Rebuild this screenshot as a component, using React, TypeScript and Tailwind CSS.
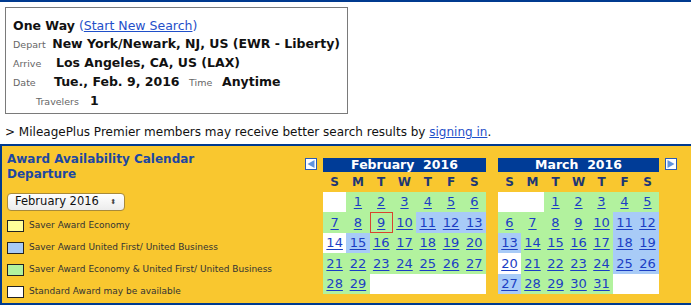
import React from 'react';

type Cell = { day?: number; tone: 'g' | 'b' | 'w'; sel?: boolean };

const toneClass: Record<Cell['tone'], string> = {
  g: 'bg-[#b2f29e]',
  b: 'bg-[#a8cbf7]',
  w: 'bg-white',
};

function buildMonth(lead: number, days: number, blue: number[], white: number[], sel?: number): Cell[] {
  const cells: Cell[] = [];
  for (let i = 0; i < lead; i++) cells.push({ tone: 'w' });
  for (let d = 1; d <= days; d++) {
    const tone = blue.includes(d) ? 'b' : white.includes(d) ? 'w' : 'g';
    cells.push({ day: d, tone, sel: d === sel });
  }
  while (cells.length % 7) cells.push({ tone: 'w' });
  return cells;
}

const feb = buildMonth(1, 29, [11, 12, 13, 15], [14], 9);
const mar = buildMonth(2, 31, [11, 12, 13, 18, 19, 25, 26, 27], [20]);

const legend = [
  { color: 'bg-[#ffff99]', label: 'Saver Award Economy' },
  { color: 'bg-[#a8cbf7]', label: 'Saver Award United First/ United Business' },
  { color: 'bg-[#b2f29e]', label: 'Saver Award Economy & United First/ United Business' },
  { color: 'bg-white', label: 'Standard Award may be available' },
];

function Arrow({ dir }: { dir: 'left' | 'right' }) {
  return (
    <svg width="12" height="12" viewBox="0 0 12 12" className="block">
      <rect x="0.5" y="0.5" width="11" height="11" fill="#ffffff" stroke="#2a5bb5" />
      {dir === 'left' ? (
        <polygon points="9.5,2 9.5,10 2.5,6" fill="#5f93e0" />
      ) : (
        <polygon points="2.5,2 2.5,10 9.5,6" fill="#5f93e0" />
      )}
    </svg>
  );
}

function Month({ title, cells, width }: { title: string; cells: Cell[]; width: string }) {
  return (
    <div className={width}>
      <div className="h-[14px] bg-[#003c97] text-center text-[12.5px] font-bold leading-[14px] text-white whitespace-pre">
        {title}
      </div>
      <div className="grid grid-cols-7 h-[20px] items-center text-center text-[12px] font-bold text-[#1d3775]">
        {['S', 'M', 'T', 'W', 'T', 'F', 'S'].map((d, i) => (
          <div key={i}>{d}</div>
        ))}
      </div>
      <div className="grid grid-cols-7 auto-rows-[20.4px]">
        {cells.map((c, i) => (
          <div key={i} className={`${toneClass[c.tone]} flex items-center justify-center`}>
            {c.day && (
              <span
                className={`flex h-full w-full items-center justify-center text-[13px] text-[#1b3ec4] underline underline-offset-2 ${
                  c.sel ? 'border border-[#d9442e]' : ''
                }`}
              >
                {c.day}
              </span>
            )}
          </div>
        ))}
      </div>
    </div>
  );
}

export default function App() {
  return (
    <div className="h-[308px] w-[691px] overflow-hidden bg-white font-['DejaVu_Sans',Verdana,sans-serif] text-[#111]">
      <div className="h-[2px] bg-[#003a8f]" />

      <div className="ml-[5px] mt-[5px] h-[107px] w-[343px] whitespace-nowrap border border-[#7a7a7a] px-[7px] pt-[9px] leading-[18px]">
        <div className="text-[12.5px]">
          <span className="font-bold">One Way</span>{' '}
          <span className="text-[#1f4fc9]">
            (<span className="underline">Start New Search</span>)
          </span>
        </div>
        <div className="flex items-baseline">
          <span className="w-[41px] text-[9.5px] text-[#666]">Depart</span>
          <span className="text-[12.5px] font-bold">New York/Newark, NJ, US (EWR - Liberty)</span>
        </div>
        <div className="flex items-baseline">
          <span className="w-[43px] text-[9.5px] text-[#666]">Arrive</span>
          <span className="text-[12.5px] font-bold">Los Angeles, CA, US (LAX)</span>
        </div>
        <div className="flex items-baseline">
          <span className="w-[41px] text-[9.5px] text-[#666]">Date</span>
          <span className="w-[135px] text-[12.5px] font-bold">Tue., Feb. 9, 2016</span>
          <span className="w-[33px] text-[9.5px] text-[#666]">Time</span>
          <span className="text-[12.5px] font-bold">Anytime</span>
        </div>
        <div className="flex items-baseline pl-[23px]">
          <span className="w-[54px] text-[9.5px] text-[#666]">Travelers</span>
          <span className="text-[12.5px] font-bold">1</span>
        </div>
      </div>

      <div className="mt-[8px] h-[20px] pl-[5px] text-[12px] leading-[20px]">
        &gt; MileagePlus Premier members may receive better search results by{' '}
        <span className="text-[#1f4fc9] underline">signing in</span>.
      </div>

      <div className="mt-[2px] flex h-[161px] border-y-2 border-l-2 border-[#003a8f] bg-[#f9c72f]">
        <div className="w-[303px] pl-[5px] pt-[6px]">
          <div className="text-[12px] font-bold leading-[15px] text-[#1d47a2]">
            Award Availability Calendar
            <br />
            Departure
          </div>
          <div className="mt-[11px] flex h-[18px] w-[118px] items-center justify-between rounded-[4px] border border-[#a88a3a] bg-gradient-to-b from-white to-[#ececec] pl-[7px] pr-[8px] text-[11.5px]">
            <span>February 2016</span>
            <span className="text-[7px] leading-[7px] text-[#444]">⬍</span>
          </div>
          <div className="mt-[9px] flex flex-col gap-[10px]">
            {legend.map((l) => (
              <div key={l.label} className="flex h-[12px] items-center">
                <div className={`h-[12px] w-[17px] border border-[#222] ${l.color}`} />
                <span className="ml-[5px] text-[9px] text-[#333]">{l.label}</span>
              </div>
            ))}
          </div>
        </div>
        <div className="flex pt-[12px]">
          <Arrow dir="left" />
          <div className="ml-[6px]">
            <Month title="February  2016" cells={feb} width="w-[163px]" />
          </div>
          <div className="ml-[12px]">
            <Month title="March  2016" cells={mar} width="w-[161px]" />
          </div>
          <div className="ml-[6px]">
            <Arrow dir="right" />
          </div>
        </div>
      </div>
    </div>
  );
}
